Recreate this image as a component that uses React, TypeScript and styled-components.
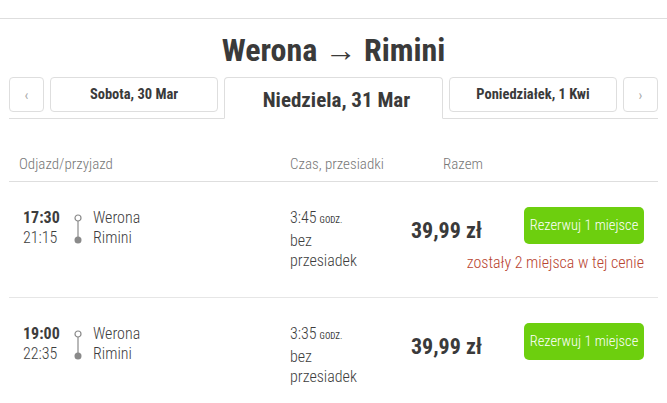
import React from "react";
import styled, {createGlobalStyle} from "styled-components";

const GlobalStyle = createGlobalStyle`
  body {
    margin: 0;
    background: #fff;
    font-family: "Roboto Condensed", "Roboto", "Liberation Sans", sans-serif;
    font-stretch: condensed;
    color: #3d3d3d;
  }
`;

const TopBar = styled.div`
  height: 18px;
  border-bottom: 1px solid #dedede;
`;

const Page = styled.div`
  padding: 0 9px;
`;

const Title = styled.h1`
  margin: 0;
  padding-top: 13px;
  height: 45px;
  text-align: center;
  font-size: 32px;
  font-weight: 700;
  line-height: 36px;
  color: #3a3a3a;
`;

const DayTabs = styled.div`
  display: flex;
  align-items: flex-start;
  gap: 6px;
  border-bottom: 1px solid #dedede;
`;

const ArrowButton = styled.button`
  flex: 0 0 35px;
  height: 35px;
  border: 1px solid #dedede;
  border-radius: 4px;
  background: #fff;
  color: #aaa;
  font-family: inherit;
  font-size: 14px;
  padding: 0;
`;

const DayTab = styled.button<{ $active?: boolean }>`
  flex: ${({$active}) => $active ? "0 0 219px" : "1 1 0"};
  height: ${({$active}) => $active ? "42px" : "35px"};
  margin-bottom: ${({$active}) => $active ? "-1px" : "0"};
  border: 1px solid #dedede;
  border-bottom-color: ${({$active}) => $active ? "#fff" : "#dedede"};
  border-radius: ${({$active}) => $active ? "4px 4px 0 0" : "4px"};
  background: #fff;
  color: #3a3a3a;
  font-family: inherit;
  font-stretch: condensed;
  font-weight: 700;
  font-size: ${({$active}) => $active ? "21px" : "14.5px"};
  padding: ${({$active}) => $active ? "3px 0 0 6px" : "0"};
`;

const HeaderRow = styled.div`
  display: grid;
  grid-template-columns: 271px 153px 1fr;
  padding: 36px 10px 0;
  height: 26px;
  border-bottom: 1px solid #dedede;
  font-size: 15px;
  font-weight: 300;
  color: #777;
  line-height: 18px;
`;

const ConnectionRow = styled.div`
  display: grid;
  grid-template-columns: 267px 121px 1fr auto;
  align-items: start;
  padding: 26px 14px 24px;
  border-bottom: 1px solid #e6e6e6;

  &:last-child {
    border-bottom: none;
  }
`;

const Route = styled.div`
  display: flex;
  align-items: flex-start;
  font-size: 16px;
  font-weight: 300;
  line-height: 20px;
`;

const Times = styled.div`
  width: 50px;
`;

const Departure = styled.div`
  font-weight: 700;
`;

const RouteMarker = styled.svg`
  margin: 6px 10px 0 0;
  flex: 0 0 10px;
`;

const Duration = styled.div`
  grid-row: span 2;
  font-size: 16px;
  font-weight: 300;
  line-height: 20.5px;
`;

const Unit = styled.span`
  font-size: 9px;
  font-weight: 400;
  text-transform: uppercase;
  margin-left: 3px;
`;

const Price = styled.div`
  padding-top: 10px;
  white-space: nowrap;
  font-size: 22px;
  font-weight: 700;
  line-height: 26px;
  color: #3a3a3a;
`;

const BookButton = styled.button`
  width: 120px;
  height: 37px;
  margin-top: -1px;
  border: none;
  border-radius: 5px;
  background: #6dcf0e;
  color: #fff;
  font-family: inherit;
  font-stretch: condensed;
  font-weight: 300;
  font-size: 14.5px;
  padding: 0;
`;

const SeatsLeft = styled.div`
  grid-column: 3 / 5;
  justify-self: end;
  margin-top: 5px;
  white-space: nowrap;
  font-size: 16px;
  font-weight: 300;
  line-height: 20px;
  color: #b8432f;
`;

type Connection = {
    dep: string;
    arr: string;
    duration: string;
    price: string;
    seatsLeft?: string;
};

const connections: Connection[] = [
    {dep: "17:30", arr: "21:15", duration: "3:45", price: "39,99 zł", seatsLeft: "zostały 2 miejsca w tej cenie"},
    {dep: "19:00", arr: "22:35", duration: "3:35", price: "39,99 zł"},
];

const Marker = () => (
    <RouteMarker width="10" height="32" viewBox="0 0 10 32">
        <circle cx="5" cy="4" r="3" fill="none" stroke="#8a8a8a" strokeWidth="1.2"/>
        <line x1="5" y1="7" x2="5" y2="24" stroke="#8a8a8a" strokeWidth="1.2"/>
        <circle cx="5" cy="26" r="3.5" fill="#8a8a8a"/>
    </RouteMarker>
);

const App: React.FC = () => {
    return <>
        <GlobalStyle/>
        <TopBar/>
        <Page>
            <Title>Werona → Rimini</Title>
            <DayTabs>
                <ArrowButton>‹</ArrowButton>
                <DayTab>Sobota, 30 Mar</DayTab>
                <DayTab $active>Niedziela, 31 Mar</DayTab>
                <DayTab>Poniedziałek, 1 Kwi</DayTab>
                <ArrowButton>›</ArrowButton>
            </DayTabs>
            <HeaderRow>
                <span>Odjazd/przyjazd</span>
                <span>Czas, przesiadki</span>
                <span>Razem</span>
            </HeaderRow>
            {connections.map((c) => (
                <ConnectionRow key={c.dep}>
                    <Route>
                        <Times>
                            <Departure>{c.dep}</Departure>
                            <div>{c.arr}</div>
                        </Times>
                        <Marker/>
                        <div>
                            <div>Werona</div>
                            <div>Rimini</div>
                        </div>
                    </Route>
                    <Duration>
                        {c.duration}<Unit>godz.</Unit>
                        <div>bez</div>
                        <div>przesiadek</div>
                    </Duration>
                    <Price>{c.price}</Price>
                    <BookButton>Rezerwuj 1 miejsce</BookButton>
                    {c.seatsLeft && <SeatsLeft>{c.seatsLeft}</SeatsLeft>}
                </ConnectionRow>
            ))}
        </Page>
    </>
}

export default App;
